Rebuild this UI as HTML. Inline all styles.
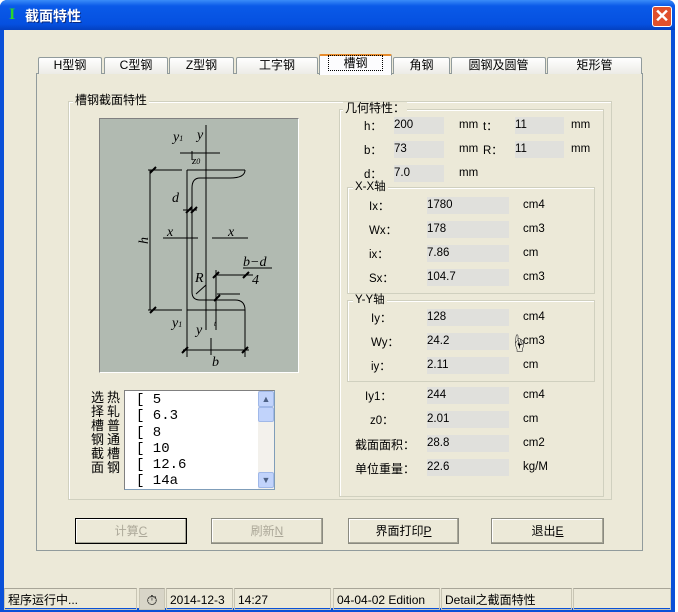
<!DOCTYPE html>
<html><head><meta charset="utf-8"><style>
*{margin:0;padding:0;box-sizing:border-box}
body{width:678px;height:612px;overflow:hidden;background:#fff;font-family:"Liberation Sans","Noto Sans CJK SC",sans-serif;font-size:12px;color:#000;position:relative}
.a{position:absolute}
.win{left:0;top:0;width:675px;height:612px;background:#0a50d8;border-radius:7px 7px 0 0}
.title{left:0;top:0;width:675px;height:30px;background:linear-gradient(#3a8cf8,#0a5ae8 20%,#0550e0 80%,#0440c0);border-radius:7px 7px 0 0}
.body{left:4px;top:30px;width:667px;height:578px;background:#ece9d8}
.tab{top:57px;height:17px;border:1px solid #919b9c;border-bottom:none;background:linear-gradient(#fff,#ecebe6);text-align:center;line-height:15px;font-size:12px;border-radius:2px 2px 0 0}
.grp{border:1px solid #d0d0bf;box-shadow:inset 1px 1px 0 #fff}
.lbl{background:#ece9d8;padding:0 2px;line-height:13px}
.fld{background:#e0e0dc;height:17px;line-height:16px;padding-left:0;font-size:11.5px}
.btn{top:518px;height:26px;border:1px solid #8a8a80;background:#ece9d8;text-align:center;line-height:24px;box-shadow:inset -1px -1px 0 #a8a798,inset 1px 1px 0 #fff}
.sb{top:588px;height:22px;border:1px solid #c8c5b4;border-top-color:#a8a598;line-height:22px;padding-left:3px}
.t{font-size:11.5px}
</style></head><body>
<div class="a win"></div>
<div class="a title"></div>
<div class="a" style="left:9px;top:6px;color:#2bd52b;font-weight:bold;font-size:16px;font-family:'Liberation Serif',serif">I</div>
<div class="a" style="left:25px;top:6px;color:#fff;font-weight:bold;font-size:14px;text-shadow:1px 1px 0 #0a2a80">截面特性</div>
<div class="a" style="left:652px;top:6px;width:20px;height:21px;background:#e0502c;border:1px solid #fff;border-radius:3px;color:#fff;text-align:center;font-size:18px;line-height:18px;font-weight:bold">✕</div>
<div class="a body"></div>

<div class="a" style="left:36px;top:73px;width:607px;height:478px;border:1px solid #919b9c;background:#fcfcfe"></div>
<div class="a" style="left:37px;top:74px;width:605px;height:476px;background:#ece9d8"></div>
<div class="a tab" style="left:38px;width:64px">H型钢</div>
<div class="a tab" style="left:104px;width:64px">C型钢</div>
<div class="a tab" style="left:169px;width:65px">Z型钢</div>
<div class="a tab" style="left:236px;width:82px">工字钢</div>
<div class="a tab" style="left:319px;top:54px;height:21px;width:73px;background:#fcfcfe;border-top:2px solid #e68b2c"><span style="border:1px dotted #000;padding:0 14px">槽钢</span></div>
<div class="a tab" style="left:393px;width:57px">角钢</div>
<div class="a tab" style="left:451px;width:95px">圆钢及圆管</div>
<div class="a tab" style="left:547px;width:95px">矩形管</div>

<div class="a grp" style="left:68px;top:101px;width:544px;height:399px"></div>
<div class="a lbl" style="left:73px;top:94px">槽钢截面特性</div>

<div class="a" style="left:99px;top:118px;width:200px;height:255px;background:#b1bab1;border:1px solid #808080;border-right-color:#fff;border-bottom-color:#fff"></div>
<svg class="a" style="left:0;top:0" width="678" height="612" viewBox="0 0 678 612" fill="none" stroke="#000" stroke-width="1">
<path d="M187 170H245M187 170V310H245M245 170Q245 178 230 178H200Q192 178 192 188V292Q192 300 200 300H235Q245 300 245 310"/>
<path d="M148 170H182M148 310H182M150 170V310M206 125V330M163 238H198M212 238H248M180 153H220M192 151V160M187 210H192M183 210H197M183 350H249M187 310V357M245 310V357M237 275H253M217 275H250M217 294H240M216 300V315M216 270V330M211 338V355"/>
<path d="M156 167l-6 6M156 307l-6 6M188 347l-6 6M248 347l-6 6M192 207l-6 6M197 207l-6 6M219 272l-6 6M249 272l-6 6M220 295l-6 6" stroke-width="2"/>
<path d="M196 294L206 285" />
<path d="M243 268H272"/>
<g fill="#000" stroke="none" font-family="Liberation Serif,serif" font-style="italic" font-size="14">
<text x="173" y="141">y<tspan font-size="8">1</tspan></text><text x="197" y="139">y</text>
<text x="192" y="164" font-size="11">z<tspan font-size="8">0</tspan></text>
<text x="172" y="202">d</text><text x="167" y="236">x</text><text x="228" y="236">x</text>
<text x="139" y="245" transform="rotate(-90 143 240)">h</text>
<text x="195" y="282">R</text><text x="243" y="266">b−d</text><text x="252" y="284">4</text>
<text x="172" y="327">y<tspan font-size="8">1</tspan></text><text x="196" y="334">y</text>
<text x="212" y="366">b</text><text x="214" y="326" font-size="7">t</text>
</g>
</svg>

<div class="a" style="left:91px;top:391px;width:14px;line-height:14px;font-size:13px">选择槽钢截面</div>
<div class="a" style="left:107px;top:391px;width:14px;line-height:14px;font-size:13px">热轧普通槽钢</div>
<div class="a" style="left:124px;top:390px;width:151px;height:100px;background:#fff;border:1px solid #7f9db9;border-top-color:#808080;border-left-color:#808080"></div>
<div class="a" style="left:136px;top:392px;font-family:'Liberation Mono',monospace;font-size:14px;line-height:16.3px;white-space:pre">[ 5
[ 6.3
[ 8
[ 10
[ 12.6
[ 14a</div>
<div class="a" style="left:258px;top:391px;width:16px;height:98px;background:#f3f1ec"></div>
<div class="a" style="left:258px;top:391px;width:16px;height:16px;background:#c1d3fb;border:1px solid #a0b8e8;border-radius:2px;font-size:9px;text-align:center;color:#4d6185;line-height:14px">▲</div>
<div class="a" style="left:258px;top:407px;width:16px;height:15px;background:#c1d3fb;border:1px solid #a0b8e8;border-radius:2px"></div>
<div class="a" style="left:258px;top:472px;width:16px;height:16px;background:#c1d3fb;border:1px solid #a0b8e8;border-radius:2px;font-size:9px;text-align:center;color:#4d6185;line-height:14px">▼</div>

<div class="a grp" style="left:339px;top:109px;width:265px;height:388px"></div>
<div class="a lbl" style="left:343px;top:102px;font-size:12px">几何特性：</div>
<div class="a t" style="left:364px;top:118px">h：</div><div class="a fld" style="left:394px;top:117px;width:50px">200</div><div class="a t" style="left:459px;top:119px">mm</div>
<div class="a t" style="left:483px;top:118px">t：</div><div class="a fld" style="left:515px;top:117px;width:49px">11</div><div class="a t" style="left:571px;top:119px">mm</div>
<div class="a t" style="left:364px;top:142px">b：</div><div class="a fld" style="left:394px;top:141px;width:50px">73</div><div class="a t" style="left:459px;top:143px">mm</div>
<div class="a t" style="left:483px;top:142px">R：</div><div class="a fld" style="left:515px;top:141px;width:49px">11</div><div class="a t" style="left:571px;top:143px">mm</div>
<div class="a t" style="left:364px;top:166px">d：</div><div class="a fld" style="left:394px;top:165px;width:50px">7.0</div><div class="a t" style="left:459px;top:167px">mm</div>

<div class="a grp" style="left:347px;top:187px;width:248px;height:107px"></div>
<div class="a lbl t" style="left:353px;top:181px">X-X轴</div>
<div class="a t" style="left:369px;top:198px">Ix：</div><div class="a fld" style="left:427px;top:197px;width:82px">1780</div><div class="a t" style="left:523px;top:199px">cm4</div>
<div class="a t" style="left:369px;top:222px">Wx：</div><div class="a fld" style="left:427px;top:221px;width:82px">178</div><div class="a t" style="left:523px;top:223px">cm3</div>
<div class="a t" style="left:369px;top:246px">ix：</div><div class="a fld" style="left:427px;top:245px;width:82px">7.86</div><div class="a t" style="left:523px;top:247px">cm</div>
<div class="a t" style="left:369px;top:270px">Sx：</div><div class="a fld" style="left:427px;top:269px;width:82px">104.7</div><div class="a t" style="left:523px;top:271px">cm3</div>

<div class="a grp" style="left:347px;top:300px;width:248px;height:82px"></div>
<div class="a lbl t" style="left:353px;top:294px">Y-Y轴</div>
<div class="a t" style="left:371px;top:310px">Iy：</div><div class="a fld" style="left:427px;top:309px;width:82px">128</div><div class="a t" style="left:523px;top:311px">cm4</div>
<div class="a t" style="left:371px;top:334px">Wy：</div><div class="a fld" style="left:427px;top:333px;width:82px">24.2</div><div class="a t" style="left:523px;top:335px">cm3</div>
<div class="a t" style="left:371px;top:358px">iy：</div><div class="a fld" style="left:427px;top:357px;width:82px">2.11</div><div class="a t" style="left:523px;top:359px">cm</div>
<div class="a" style="left:510px;top:330px;font-size:18px;color:#000;text-shadow:0 0 1px #fff">☝</div>

<div class="a t" style="left:365px;top:388px">Iy1：</div><div class="a fld" style="left:427px;top:387px;width:82px">244</div><div class="a t" style="left:523px;top:389px">cm4</div>
<div class="a t" style="left:370px;top:412px">z0：</div><div class="a fld" style="left:427px;top:411px;width:82px">2.01</div><div class="a t" style="left:523px;top:413px">cm</div>
<div class="a" style="left:355px;top:436px">截面面积：</div><div class="a fld" style="left:427px;top:435px;width:82px">28.8</div><div class="a t" style="left:523px;top:437px">cm2</div>
<div class="a" style="left:355px;top:460px">单位重量：</div><div class="a fld" style="left:427px;top:459px;width:82px">22.6</div><div class="a t" style="left:523px;top:461px">kg/M</div>

<div class="a btn" style="left:75px;width:112px;color:#aca899;border-color:#000">计算<u>C</u></div>
<div class="a btn" style="left:211px;width:112px;color:#aca899">刷新<u>N</u></div>
<div class="a btn" style="left:348px;width:111px">界面打印<u>P</u></div>
<div class="a btn" style="left:491px;width:113px">退出<u>E</u></div>

<div class="a sb" style="left:4px;width:133px">程序运行中...</div>
<div class="a sb" style="left:139px;width:26px;background:#d8d5c8;text-align:center;padding:0;font-size:14px">⏱</div>
<div class="a sb" style="left:166px;width:67px">2014-12-3</div>
<div class="a sb" style="left:234px;width:97px">14:27</div>
<div class="a sb" style="left:333px;width:107px">04-04-02 Edition</div>
<div class="a sb" style="left:441px;width:131px">Detail之截面特性</div>
<div class="a sb" style="left:573px;width:98px"></div>
</body></html>
